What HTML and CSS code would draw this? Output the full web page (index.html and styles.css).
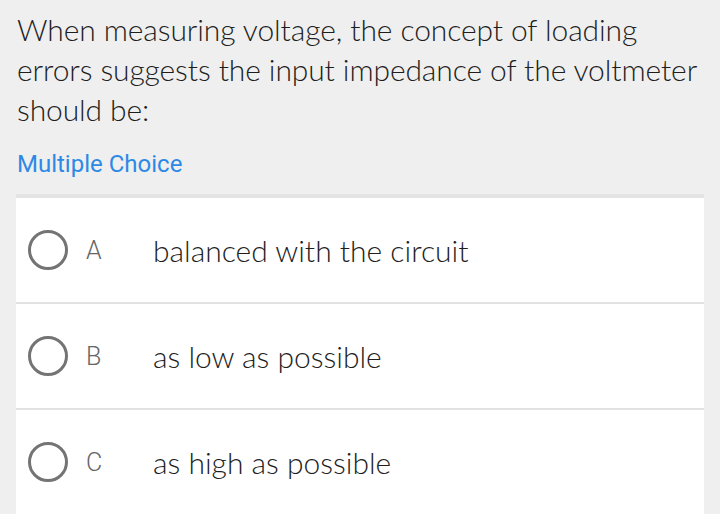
FILE: index.html
```html
<!DOCTYPE html>
<html>
<head>
<meta charset="utf-8">
<link rel="stylesheet" href="styles.css">
</head>
<body>
<div class="page">
  <p class="question">When measuring voltage, the concept of loading errors suggests the input impedance of the voltmeter should be:</p>
  <div class="type">Multiple Choice</div>
  <div class="card">
    <div class="option">
      <span class="radio"></span>
      <span class="letter">A</span>
      <span class="text">balanced with the circuit</span>
    </div>
    <div class="option">
      <span class="radio"></span>
      <span class="letter">B</span>
      <span class="text">as low as possible</span>
    </div>
    <div class="option">
      <span class="radio"></span>
      <span class="letter">C</span>
      <span class="text">as high as possible</span>
    </div>
  </div>
</div>
</body>
</html>
```
FILE: styles.css
```css
html, body {
  margin: 0;
  padding: 0;
  background: #efefef;
}
.page {
  width: 720px;
  height: 514px;
  overflow: hidden;
}
.question {
  margin: 0;
  padding: 9px 13px 0 17px;
  font-family: "Lato", "Open Sans", sans-serif;
  font-weight: 300;
  font-size: 30px;
  letter-spacing: -0.1px;
  line-height: 40px;
  color: #1e1e1e;
}
.type {
  margin: 20px 0 0 17px;
  font-family: Roboto, sans-serif;
  font-size: 24px;
  line-height: 30px;
  color: #2d89e5;
}
.card {
  margin: 15px 16px 0 16px;
  background: #fff;
  border-top: 4px solid #e4e4e4;
}
.option {
  display: flex;
  align-items: center;
  height: 104px;
  border-bottom: 2px solid #e2e2e2;
}
.radio {
  box-sizing: border-box;
  width: 40px;
  height: 40px;
  margin-left: 12px;
  border: 3.5px solid #747474;
  border-radius: 50%;
}
.letter {
  width: 67px;
  margin-left: 18px;
  font-family: Roboto, sans-serif;
  font-weight: 300;
  font-size: 25px;
  color: #666;
}
.text {
  font-family: "Lato", "Open Sans", sans-serif;
  font-weight: 300;
  font-size: 30px;
  color: #1e1e1e;
}
```
